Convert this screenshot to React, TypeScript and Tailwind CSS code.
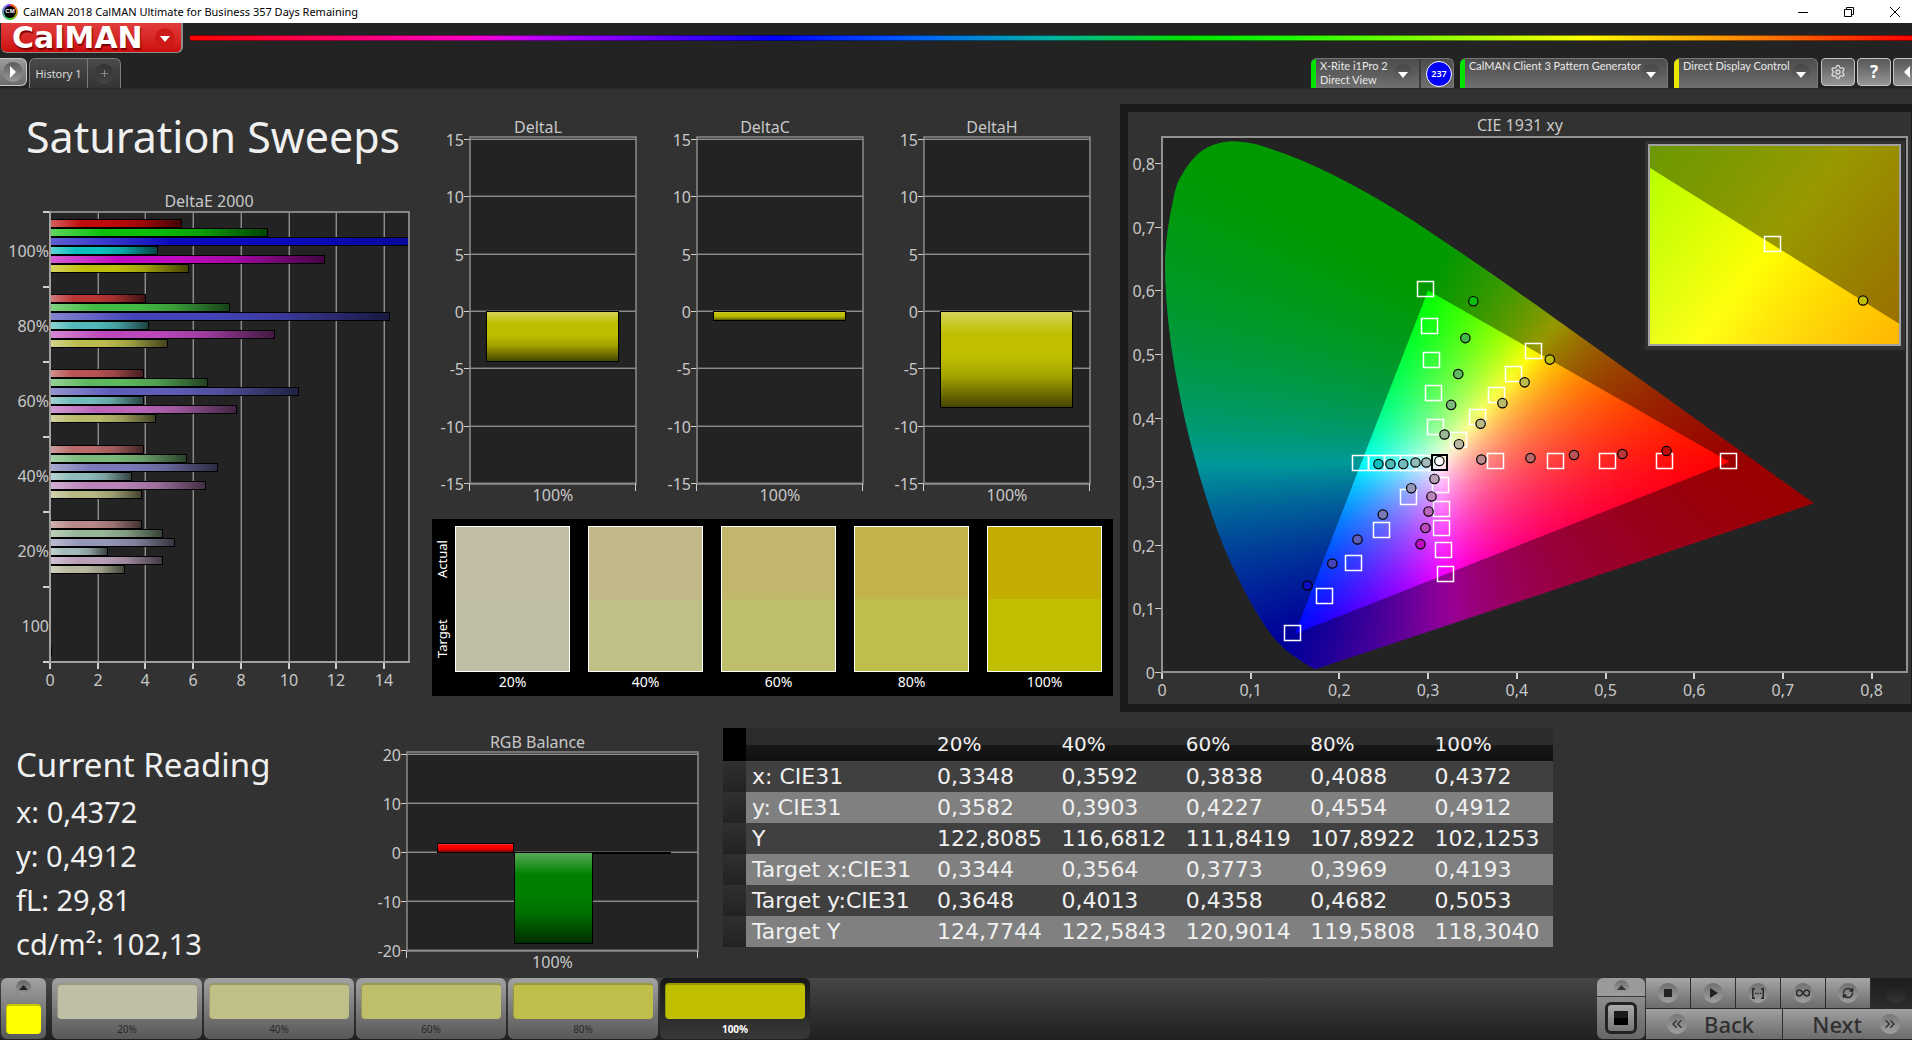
import React, { useMemo } from 'react';
import { clsx } from 'clsx';
import { ChevronsLeft, ChevronsRight, Settings, RefreshCw } from 'lucide-react';

const LEVELS = ['20%', '40%', '60%', '80%', '100%'];

// one row per saturation level, R G B C M Y
const PALETTE: Record<string, string[]> = {
  '100%': ['#bf0b0b', '#0bbf0b', '#0b0bbf', '#0bbfbf', '#bf0bbf', '#bfbf0b'],
  '80%': ['#bb3636', '#44bb44', '#4444b8', '#52baba', '#bb48bb', '#bbbb4e'],
  '60%': ['#b95252', '#5eb95e', '#5e5eb9', '#72bbbb', '#b966b9', '#b9b96a'],
  '40%': ['#b96a6a', '#7ab97a', '#7a7ab9', '#90bbbb', '#b984b9', '#b9b986'],
  '20%': ['#b98888', '#98b698', '#9696b8', '#a4b9b9', '#b9a0b9', '#b9b9a0'],
};

const DELTA_E = [
  { label: '100%', values: [5.5, 9.1, 21, 4.5, 11.5, 5.8] },
  { label: '80%', values: [4, 7.5, 14.2, 4.1, 9.4, 4.9] },
  { label: '60%', values: [3.9, 6.6, 10.4, 3.9, 7.8, 4.4] },
  { label: '40%', values: [3.9, 5.7, 7, 3.4, 6.5, 3.8] },
  { label: '20%', values: [3.8, 4.7, 5.2, 2.4, 4.7, 3.1] },
];

const SWATCHES = [
  { label: '20%', actual: '#c2bda6', target: '#bebfa5' },
  { label: '40%', actual: '#c3b88a', target: '#bfbf88' },
  { label: '60%', actual: '#c2b56c', target: '#bebe6b' },
  { label: '80%', actual: '#c2b34b', target: '#bebf4a' },
  { label: '100%', actual: '#c2ad00', target: '#bfbf00' },
];

const READINGS = ['x: 0,4372', 'y: 0,4912', 'fL: 29,81', 'cd/m²: 102,13'];

const TABLE_ROWS = [
  { name: 'x: CIE31', cells: ['0,3348', '0,3592', '0,3838', '0,4088', '0,4372'] },
  { name: 'y: CIE31', cells: ['0,3582', '0,3903', '0,4227', '0,4554', '0,4912'] },
  { name: 'Y', cells: ['122,8085', '116,6812', '111,8419', '107,8922', '102,1253'] },
  { name: 'Target x:CIE31', cells: ['0,3344', '0,3564', '0,3773', '0,3969', '0,4193'] },
  { name: 'Target y:CIE31', cells: ['0,3648', '0,4013', '0,4358', '0,4682', '0,5053'] },
  { name: 'Target Y', cells: ['124,7744', '122,5843', '120,9014', '119,5808', '118,3040'] },
];

type Point = [number, number];

const LOCUS: Point[] = [
  [0.1741, 0.005], [0.1714, 0.0051], [0.1644, 0.0109], [0.1566, 0.0177], [0.144, 0.0297], [0.1355, 0.0399],
  [0.1241, 0.0578], [0.1096, 0.0868], [0.0913, 0.1327], [0.0687, 0.2007], [0.0454, 0.295], [0.0235, 0.4127],
  [0.0082, 0.5384], [0.0039, 0.6548], [0.0139, 0.7502], [0.024, 0.785], [0.0389, 0.812], [0.0550, 0.827],
  [0.0743, 0.8338], [0.094, 0.8325], [0.1142, 0.8262], [0.1547, 0.8059], [0.1929, 0.7816], [0.2296, 0.7543],
  [0.2658, 0.7243], [0.3016, 0.6923], [0.3731, 0.6245], [0.4441, 0.5547], [0.5125, 0.4866], [0.5752, 0.4242],
  [0.627, 0.3725], [0.6658, 0.334], [0.6915, 0.3083], [0.719, 0.2809], [0.7347, 0.2653],
];

const REC709: Point[] = [[0.64, 0.33], [0.3, 0.6], [0.15, 0.06]];

// 100% first, down to 20%
const TARGETS: Point[] = [
  [0.639, 0.332], [0.567, 0.332], [0.503, 0.332], [0.444, 0.332], [0.376, 0.332],
  [0.298, 0.602], [0.302, 0.544], [0.304, 0.49], [0.307, 0.439], [0.309, 0.385],
  [0.148, 0.061], [0.184, 0.1195], [0.216, 0.1706], [0.2475, 0.2225], [0.279, 0.275],
  [0.224, 0.3294], [0.242, 0.3294], [0.26, 0.3294], [0.278, 0.3294], [0.295, 0.3294],
  [0.32, 0.154], [0.318, 0.192], [0.316, 0.226], [0.316, 0.257], [0.3145, 0.294],
  [0.4193, 0.5053], [0.3969, 0.4682], [0.3773, 0.4358], [0.3564, 0.4013], [0.3344, 0.3648],
];

const ACTUALS: Point[][] = [
  [[0.5688, 0.3475], [0.519, 0.3428], [0.4645, 0.3412], [0.4154, 0.3365], [0.36, 0.334]],
  [[0.351, 0.583], [0.342, 0.525], [0.334, 0.4685], [0.326, 0.42], [0.3185, 0.3734]],
  [[0.164, 0.136], [0.192, 0.1706], [0.2204, 0.2083], [0.249, 0.2476], [0.281, 0.289]],
  [[0.244, 0.327], [0.2576, 0.327], [0.272, 0.327], [0.2858, 0.3294], [0.298, 0.3294]],
  [[0.2914, 0.201], [0.297, 0.2264], [0.3005, 0.2524], [0.3038, 0.276], [0.3072, 0.3035]],
  [[0.4372, 0.4912], [0.4088, 0.4554], [0.3838, 0.4227], [0.3592, 0.3903], [0.3348, 0.3582]],
];

function mix(hex: string, to: number, amount: number) {
  const n = parseInt(hex.slice(1), 16);
  const ch = [n >> 16, (n >> 8) & 255, n & 255].map((c) => Math.round(c + (to - c) * amount));
  return `rgb(${ch.join(',')})`;
}

// linear on purpose, gamma would wash out the middle of the gamut
function xyToRgb(x: number, y: number) {
  const X = x / y;
  const Z = (1 - x - y) / y;
  const lin = [
    3.2406 * X - 1.5372 - 0.4986 * Z,
    -0.9689 * X + 1.8758 + 0.0415 * Z,
    0.0557 * X - 0.204 + 1.057 * Z,
  ].map((c) => Math.max(0, c));
  const top = Math.max(...lin);
  return `rgb(${lin.map((c) => Math.round((255 * c) / top)).join(',')})`;
}

function Shade({ id, color, vertical }: { id: string; color: string; vertical?: boolean }) {
  return (
    <linearGradient id={id} x1="0" y1="0" x2={vertical ? 0 : 1} y2={vertical ? 1 : 0}>
      <stop offset="0" stopColor={mix(color, 255, 0.35)} />
      <stop offset="0.24" stopColor={color} />
      <stop offset="0.46" stopColor={color} />
      <stop offset="0.68" stopColor={mix(color, 0, 0.15)} />
      <stop offset="1" stopColor={mix(color, 0, 0.65)} />
    </linearGradient>
  );
}

function DeltaEChart() {
  const px = (v: number) => Math.round(50 + v * 23.85);
  return (
    <svg viewBox="0 0 420 508" className="w-full font-['Noto_Sans',sans-serif] text-[16px]" role="img" aria-label="DeltaE 2000">
      <defs>
        <clipPath id="de-plot"><rect x="50" y="22" width="359" height="451" /></clipPath>
        {DELTA_E.map((g) => PALETTE[g.label].map((c, i) => (
          <Shade key={g.label + i} id={`de-${parseInt(g.label)}-${i}`} color={c} />
        )))}
      </defs>
      <text x="209" y="18" textAnchor="middle" fill="#c8c8c8">DeltaE 2000</text>
      <rect x="50" y="22" width="359" height="451" fill="#232323" />
      {[2, 4, 6, 8, 10, 12, 14].map((v) => (
        <g key={v}>
          <rect x={px(v) - 1} y="23" width="1" height="450" fill="#505050" />
          <rect x={px(v)} y="23" width="1" height="450" fill="#8c8c8c" />
        </g>
      ))}
      <g clipPath="url(#de-plot)">
        {DELTA_E.map((g, gi) => g.values.map((v, i) => (
          <rect
            key={i}
            x="50.5"
            y={Math.round(gi * 75.2) + 30.5 + i * 9}
            width={px(v) - 50}
            height="8"
            fill={`url(#de-${parseInt(g.label)}-${i})`}
            stroke="#000"
          />
        )))}
      </g>
      <rect x="50" y="458" width="2" height="9" fill="#000" />
      <path d="M50 23h359v450" fill="none" stroke="#858585" strokeWidth="2" />
      <path d="M50 22v451h360" fill="none" stroke="#a0a0a0" strokeWidth="2" />
      {[0, 1, 2, 3, 4, 5, 6].map((i) => (
        <rect key={i} x="43" y={Math.round(22 + i * 75)} width="6" height="2" fill="#d0d0d0" />
      ))}
      {['100%', '80%', '60%', '40%', '20%', '100'].map((t, i) => (
        <text key={i} x="49" y={68 + i * 75} textAnchor="end" fill="#c8c8c8">{t}</text>
      ))}
      {[0, 2, 4, 6, 8, 10, 12, 14].map((v) => (
        <g key={v}>
          <rect x={px(v) - 1} y="474" width="2" height="6" fill="#d0d0d0" />
          <text x={px(v)} y="497" textAnchor="middle" fill="#c8c8c8">{v}</text>
        </g>
      ))}
    </svg>
  );
}

interface Bar { x: number; width: number; value: number; color: string }

interface ValueChartProps {
  id: string;
  title: string;
  width: number;
  height: number;
  left: number;
  right: number;
  top: number;
  bottom: number;
  max: number;
  step: number;
  bars: Bar[];
}

function ValueChart({ id, title, width, height, left, right, top, bottom, max, step, bars }: ValueChartProps) {
  const py = (v: number) => Math.round(top + ((max - v) / (2 * max)) * (bottom - top));
  const ticks: number[] = [];
  for (let v = max; v >= -max; v -= step) ticks.push(v);

  return (
    <svg viewBox={`0 0 ${width} ${height}`} className="w-full font-['Noto_Sans',sans-serif] text-[16px]" role="img" aria-label={title}>
      <defs>
        {bars.map((b, i) => <Shade key={i} id={`${id}-${i}`} color={b.color} vertical />)}
      </defs>
      <text x={(left + right) / 2 - 15} y={top - 6} textAnchor="middle" fill="#c8c8c8">{title}</text>
      <rect x={left} y={top - 2} width={right - left} height={bottom - top + 2} fill="#232323" />
      {ticks.map((v) => (
        <g key={v}>
          <rect x={left} y={py(v) - 1} width={right - left} height="1" fill="#505050" />
          <rect x={left} y={py(v)} width={right - left} height="1" fill="#8c8c8c" />
          <rect x={left - 6} y={py(v)} width="6" height="1" fill="#d0d0d0" />
          <text x={left - 6} y={py(v) + 7} textAnchor="end" fill="#c8c8c8">{v}</text>
        </g>
      ))}
      <rect x={left} y={top - 2} width={right - left} height={bottom - top + 3} fill="none" stroke="#8c8c8c" strokeWidth="1.5" />
      {bars.map((b, i) => (
        <rect
          key={i}
          x={b.x + 0.5}
          y={Math.min(py(0), py(b.value)) + 0.5}
          width={b.width}
          height={Math.max(1, Math.abs(py(b.value) - py(0)))}
          fill={`url(#${id}-${i})`}
          stroke="#000"
        />
      ))}
      <rect x={left - 1} y={bottom + 1} width="1" height="7" fill="#d0d0d0" />
      <rect x={right - 1} y={bottom + 1} width="1" height="7" fill="#d0d0d0" />
      <text x={(left + right) / 2} y={bottom + 18} textAnchor="middle" fill="#c8c8c8">100%</text>
    </svg>
  );
}

interface FieldProps {
  id: string;
  x: number;
  y: number;
  width: number;
  height: number;
  toXY: (px: number, py: number) => Point;
}

// chromaticity field, painted as thin rows with a gradient each
function ColorField({ id, x, y, width, height, toXY }: FieldProps) {
  const rows = useMemo(() => {
    const out: React.ReactNode[] = [];
    const cols = Math.round(width / 14);
    for (let row = 0; row * 3 < height; row++) {
      const top = y + row * 3;
      const stops: React.ReactNode[] = [];
      for (let c = 0; c <= cols; c++) {
        const [cx, cy] = toXY(x + (c / cols) * width, top + 1);
        stops.push(<stop key={c} offset={c / cols} stopColor={xyToRgb(cx, Math.max(cy, 0.002))} />);
      }
      out.push(
        <g key={row}>
          <linearGradient id={`${id}-r${row}`} gradientUnits="userSpaceOnUse" x1={x} y1="0" x2={x + width} y2="0">{stops}</linearGradient>
          <rect x={x} y={top} width={width} height={Math.min(3, y + height - top)} fill={`url(#${id}-r${row})`} shapeRendering="crispEdges" />
        </g>,
      );
    }
    return out;
  }, [id, x, y, width, height, toXY]);
  return <g id={id}>{rows}</g>;
}

const sx = (x: number) => 34 + 887 * x;
const sy = (y: number) => 560 - 636 * y;
const unproject = (px: number, py: number): Point => [(px - 34) / 887, (560 - py) / 636];

// magnified view around the 100% yellow target
const zx = (x: number) => 644 + (x - 0.4193) * 5084;
const zy = (y: number) => 132 - (y - 0.5053) * 4007;
const unprojectZoom = (px: number, py: number): Point => [0.4193 + (px - 644) / 5084, 0.5053 - (py - 132) / 4007];

const poly = (pts: Point[], fx: (n: number) => number, fy: (n: number) => number) =>
  pts.map(([a, b]) => `${fx(a).toFixed(1)},${fy(b).toFixed(1)}`).join(' ');

function smoothPath(pts: Point[]) {
  const p = pts.map(([a, b]): Point => [sx(a), sy(b)]);
  let d = `M${p[0][0]} ${p[0][1]}`;
  for (let i = 0; i < p.length - 1; i++) {
    const p0 = p[Math.max(0, i - 1)];
    const p3 = p[Math.min(p.length - 1, i + 2)];
    const [p1, p2] = [p[i], p[i + 1]];
    d += `C${p1[0] + (p2[0] - p0[0]) / 6} ${p1[1] + (p2[1] - p0[1]) / 6} ${p2[0] - (p3[0] - p1[0]) / 6} ${p2[1] - (p3[1] - p1[1]) / 6} ${p2[0]} ${p2[1]}`;
  }
  return d + 'Z';
}

function CieChart() {
  const levels = ['100%', '80%', '60%', '40%', '20%'];
  return (
    <svg viewBox="0 0 783 592" className="w-full font-['Noto_Sans',sans-serif] text-[16px]" role="img" aria-label="CIE 1931 xy">
      <defs>
        <clipPath id="locus"><path d={smoothPath(LOCUS)} /></clipPath>
        <clipPath id="gamut"><polygon points={poly(REC709, sx, sy)} /></clipPath>
        <clipPath id="zoom-gamut"><polygon points={poly(REC709, zx, zy)} /></clipPath>
        <clipPath id="zoom-box"><rect x="521" y="33" width="251" height="200" /></clipPath>
        <ColorField id="field" x={34} y={26} width={656} height={534} toXY={unproject} />
        <ColorField id="zoom-field" x={521} y={33} width={251} height={200} toXY={unprojectZoom} />
      </defs>
      <text x="392" y="19" textAnchor="middle" fill="#c8c8c8">CIE 1931 xy</text>
      <rect x="34" y="25" width="746" height="535" fill="#232323" />
      <g clipPath="url(#locus)">
        <use href="#field" />
        <rect x="34" y="25" width="660" height="535" fill="#000" fillOpacity="0.4" />
      </g>
      <g clipPath="url(#gamut)"><use href="#field" /></g>
      <rect x="34" y="25" width="745" height="535" fill="none" stroke="#929292" strokeWidth="2" />

      {TARGETS.map(([x, y], i) => (
        <rect key={i} x={Math.round(sx(x)) - 8.5} y={Math.round(sy(y)) - 7.5} width="16" height="15" fill="none" stroke="#fff" strokeWidth="1.5" />
      ))}
      <rect x="304" y="343" width="15" height="15" fill="none" stroke="#000" strokeWidth="2" />
      {ACTUALS.map((set, hue) => set.map(([x, y], i) => (
        <circle key={`${hue}-${i}`} cx={sx(x)} cy={sy(y)} r="4.7" fill={PALETTE[levels[i]][hue]} stroke="#000" strokeWidth="1.2" />
      )))}
      <circle cx={sx(0.3127)} cy={sy(0.3318)} r="4.7" fill="#fff" stroke="#000" strokeWidth="1.2" />

      <rect x="517" y="29" width="260" height="209" fill="#323232" />
      <g clipPath="url(#zoom-box)">
        <use href="#zoom-field" />
        <rect x="521" y="33" width="251" height="200" fill="#000" fillOpacity="0.4" />
        <g clipPath="url(#zoom-gamut)"><use href="#zoom-field" /></g>
      </g>
      <rect x="521" y="33" width="251" height="200" fill="none" stroke="#a0a0a0" strokeWidth="2" />
      <rect x="636.5" y="124.5" width="16" height="15" fill="none" stroke="#fff" strokeWidth="1.5" />
      <circle cx={zx(0.4372)} cy={zy(0.4912)} r="4.7" fill="#bfbf00" stroke="#000" strokeWidth="1.2" />

      {[0, 1, 2, 3, 4, 5, 6, 7, 8].map((n) => (
        <g key={n}>
          <rect x={Math.round(sx(n / 10)) - 1} y="561" width="2" height="6" fill="#d0d0d0" />
          <text x={sx(n / 10)} y="584" textAnchor="middle" fill="#c8c8c8">{n ? `0,${n}` : '0'}</text>
          <rect x="27" y={Math.round(sy(n / 10))} width="6" height="1" fill="#d0d0d0" />
          <text x="27" y={sy(n / 10) + 7} textAnchor="end" fill="#c8c8c8">{n ? `0,${n}` : '0'}</text>
        </g>
      ))}
    </svg>
  );
}

function Arrow() {
  return (
    <span className="flex size-5 shrink-0 items-center justify-center rounded-full bg-linear-to-b from-[#454545] to-[#6c6c6c]">
      <svg viewBox="0 0 10 6" className="mt-0.5 h-1.5 w-2.5" fill="#fff"><path d="M0 0h10L5 6z" /></svg>
    </span>
  );
}

function TitleBar() {
  return (
    <div className="flex h-[23px] items-center bg-white pr-3 pl-0.5 text-black">
      <span className="flex size-4 items-center justify-center rounded-full bg-conic from-[#ff2020] via-[#20d020] to-[#8020ff]">
        <span className="flex size-3 items-center justify-center rounded-full bg-black font-['Liberation_Sans',sans-serif] text-[6px] font-bold text-white">CM</span>
      </span>
      <span className="ml-[5px] font-['Noto_Sans',sans-serif] text-[11px] leading-4">CalMAN 2018 CalMAN Ultimate for Business 357 Days Remaining</span>
      <div className="ml-auto flex items-center gap-9">
        <button aria-label="Minimize" className="flex h-4 w-2.5 items-center">
          <svg viewBox="0 0 10 10" className="size-2.5"><path d="M0 5.5h10" stroke="#000" /></svg>
        </button>
        <button aria-label="Restore" className="flex h-4 w-2.5 items-center">
          <svg viewBox="0 0 10 10" className="size-2.5" fill="none" stroke="#000"><path d="M.5 2.5h7v7h-7zM2.5 2.5v-2h7v7h-2" /></svg>
        </button>
        <button aria-label="Close" className="flex h-4 w-2.5 items-center">
          <svg viewBox="0 0 10 10" className="size-2.5" stroke="#000"><path d="M0 0l10 10M10 0L0 10" /></svg>
        </button>
      </div>
    </div>
  );
}

function DeviceTab({ color, lines, className, children }: { color: string; lines: string[]; className?: string; children?: React.ReactNode }) {
  return (
    <div className={clsx("flex h-[30px] overflow-hidden rounded-t-md border-t border-r border-[#777] bg-linear-to-b from-[#4c4c4c] to-[#707070]", className)}>
      <span className={clsx('w-[5px] shrink-0', color)} />
      <button className="flex flex-1 items-center justify-between pr-1.5 pl-1">
        <span className="self-start text-left font-['Lato',sans-serif] text-[11px] leading-[14px] whitespace-nowrap text-[#e8e8e8]">
          {lines.map((l) => <span key={l} className="block">{l}</span>)}
        </span>
        <Arrow />
      </button>
      {children}
    </div>
  );
}

function ToolButton({ label, className, children }: { label: string; className?: string; children: React.ReactNode }) {
  return (
    <button aria-label={label} className={clsx('flex h-7 items-center justify-center rounded-sm border border-[#c4c4c4] bg-linear-to-b from-[#585858] to-[#969696]', className)}>
      <span className="flex size-5 items-center justify-center rounded-full bg-linear-to-b from-[#5c5c5c] to-[#909090] text-white">{children}</span>
    </button>
  );
}

function Header() {
  return (
    <header className="bg-[#232323]">
      <div className="flex items-center">
        <button className="ml-px flex h-[30px] w-[182px] items-center justify-between rounded-b-md border-r-2 border-b border-[#8d8d8d] bg-linear-to-b from-[#e23c3c] to-[#cc0a0a] pr-1.5 pl-[11px]">
          <span className="font-['DejaVu_Sans',sans-serif] text-[30px] leading-[30px] font-bold text-white [text-shadow:1px_2px_1px_#7a0000]">CalMAN</span>
          <span className="flex size-5 items-center justify-center rounded-full bg-[#cf1a1a]">
            <svg viewBox="0 0 10 6" className="mt-0.5 h-1.5 w-2.5" fill="#fff"><path d="M0 0h10L5 6z" /></svg>
          </span>
        </button>
        <div className="ml-[7px] h-[6px] flex-1 border-y border-black/50 bg-[linear-gradient(90deg,#ff0000,#ff00c0_16%,#c000ff_20%,#0000ff_34%,#0060ff_42%,#00b0a0_50%,#00e000_58%,#20ff00_64%,#ffff00_81%,#ff8000_91%,#ff0000)]" />
      </div>
      <div className="mt-[5px] flex items-start">
        <button aria-label="Open workflow" className="flex h-7 w-[27px] items-center justify-center rounded-r-md border border-l-0 border-[#c8c8c8] bg-linear-to-b from-[#9c9c9c] to-[#6c6c6c]">
          <span className="flex size-5 items-center justify-center rounded-full bg-linear-to-b from-[#5c5c5c] to-[#999]">
            <svg viewBox="0 0 6 12" className="h-3 w-1.5" fill="#fff"><path d="M0 0l6 6-6 6z" /></svg>
          </span>
        </button>
        <div className="ml-0.5 flex h-[30px] rounded-t-md border border-b-0 border-[#7c7c7c] bg-linear-to-b from-[#4a4a4a] to-[#333]">
          <button className="w-[58px] border-r border-[#7c7c7c] text-center font-['Noto_Sans',sans-serif] text-[11px] leading-4 text-[#dcdcdc]">History 1</button>
          <button aria-label="Add tab" className="flex w-8 items-center justify-center">
            <span className="flex size-5 items-center justify-center rounded-full bg-linear-to-b from-[#333] to-[#444]">
              <svg viewBox="0 0 7 7" className="size-[7px]" stroke="#888"><path d="M3.5 0v7M0 3.5h7" /></svg>
            </span>
          </button>
        </div>
        <div className="ml-auto flex items-start">
          <DeviceTab color="bg-[#00e400]" className="w-[143px]" lines={['X-Rite i1Pro 2', 'Direct View']}>
            <span className="flex w-[34px] items-center justify-center border-l-2 border-[#3c3c3c] pl-1">
              <span className="flex size-[26px] items-center justify-center rounded-full border border-white bg-[#0000fa] font-['Noto_Sans',sans-serif] text-[9px] font-semibold text-white">237</span>
            </span>
          </DeviceTab>
          <DeviceTab color="bg-[#00e400]" className="ml-1.5 w-[208px]" lines={['CalMAN Client 3 Pattern Generator']} />
          <DeviceTab color="bg-[#e8e800]" className="ml-1.5 w-[144px]" lines={['Direct Display Control']} />
          <ToolButton label="Settings" className="ml-[3px] w-[34px]"><Settings className="size-4 text-[#ddd]" strokeWidth={2} /></ToolButton>
          <ToolButton label="Help" className="ml-0.5 w-[34px]"><span className="font-['Noto_Sans',sans-serif] text-[17px] leading-5 font-bold">?</span></ToolButton>
          <ToolButton label="Collapse" className="ml-0.5 w-[19px] rounded-r-none border-r-0">
            <svg viewBox="0 0 6 12" className="ml-2 h-3 w-1.5" fill="#fff"><path d="M6 0L0 6l6 6z" /></svg>
          </ToolButton>
        </div>
      </div>
    </header>
  );
}

function SwatchPanel() {
  return (
    <div className="mt-2.5 flex h-[177px] bg-black pt-[7px] pr-[11px] font-['Noto_Sans',sans-serif] text-white">
      <div className="mr-[3px] flex h-[146px] w-5 flex-col items-center text-[13px] leading-5">
        <span className="flex flex-1 rotate-180 items-center justify-center pt-2 [writing-mode:vertical-rl]">Actual</span>
        <span className="flex flex-1 rotate-180 items-center justify-center pb-1 [writing-mode:vertical-rl]">Target</span>
      </div>
      <div className="grid flex-1 grid-cols-5 gap-[18px]">
        {SWATCHES.map((s) => (
          <div key={s.label} className="text-center">
            <div className="h-[146px] border border-white">
              <div className="h-1/2" style={{ background: s.actual }} />
              <div className="h-1/2" style={{ background: s.target }} />
            </div>
            <div className="text-[14px] leading-5">{s.label}</div>
          </div>
        ))}
      </div>
    </div>
  );
}

function ReadingsTable() {
  return (
    <table className="w-full table-fixed border-collapse text-left font-['DejaVu_Sans',sans-serif] text-[22px] leading-[31px] text-[#f0f0f0]">
      <colgroup>
        <col className="w-[23px]" />
        <col className="w-[185px]" />
        <col span={5} />
      </colgroup>
      <thead>
        <tr className="h-[33px]">
          <th className="bg-black" />
          <th className="bg-[linear-gradient(#2c2c2c_50%,#181818_50%,#101010)]" />
          {LEVELS.map((l) => (
            <th key={l} scope="col" className="bg-[linear-gradient(#2c2c2c_50%,#181818_50%,#101010)] pl-1.5 text-[20px] font-normal">{l}</th>
          ))}
        </tr>
      </thead>
      <tbody>
        {TABLE_ROWS.map((r, i) => (
          <tr key={r.name} className={clsx('h-[31px]', i % 2 ? 'bg-[#808080]' : 'bg-[#404040]')}>
            <td className="bg-linear-to-b from-[#303030] to-[#222]" />
            <th scope="row" className="pl-1.5 font-normal whitespace-nowrap">{r.name}</th>
            {r.cells.map((c, j) => <td key={j} className="pl-1.5">{c}</td>)}
          </tr>
        ))}
      </tbody>
    </table>
  );
}

function Transport({ label, children, dark }: { label: string; children?: React.ReactNode; dark?: boolean }) {
  return (
    <button
      aria-label={label}
      className={clsx('flex h-[30px] items-center justify-center bg-linear-to-b', dark ? 'flex-1 from-[#1e1e1e] to-[#2c2c2c] pl-2' : 'w-11 from-[#a6a6a6] to-[#6c6c6c]')}
    >
      <span className={clsx('flex size-5 items-center justify-center rounded-full bg-linear-to-b', dark ? 'from-[#1c1c1c] to-[#343434]' : 'from-[#707070] to-[#a0a0a0]')}>{children}</span>
    </button>
  );
}

function Footer() {
  return (
    <footer className="flex h-[62px] bg-linear-to-b from-[#464646] to-[#202020] pb-px pl-px font-['Noto_Sans',sans-serif]">
      <button aria-label="Current color" className="flex w-[45px] flex-col items-center justify-between rounded-md bg-linear-to-b from-[#a2a2a2] to-[#585858] pt-0.5 pb-[5px]">
        <span className="flex size-[15px] items-center justify-center rounded-full bg-linear-to-b from-[#666] to-[#999]">
          <svg viewBox="0 0 9 5" className="h-[5px] w-[9px]" fill="#222"><path d="M4.500 0L9 5H0z" /></svg>
        </span>
        <span className="h-[30px] w-[35px] rounded-sm border-t-2 border-l border-[#c9c900] bg-[#ffff00]" />
      </button>
      <div className="ml-1.5 flex gap-0.5">
        {SWATCHES.map((s) => {
          const active = s.label === '100%';
          return (
            <button
              key={s.label}
              className={clsx('flex w-[150px] flex-col items-center rounded-md bg-linear-to-b pt-[5px]', active ? 'from-[#181818] to-[#383838]' : 'from-[#a2a2a2] to-[#585858]')}
            >
              <span className="h-9 w-[140px] rounded-sm border-t-2 border-l border-black/20" style={{ backgroundColor: s.target }} />
              <span className={clsx('text-[10px] leading-5', active ? 'font-bold text-white' : 'text-[#2a2a2a]')}>{s.label}</span>
            </button>
          );
        })}
      </div>
      <div className="ml-auto flex w-12 flex-col gap-px">
        <button aria-label="Expand" className="flex h-[18px] items-center justify-center rounded-t-md bg-[#9a9a9a]">
          <span className="flex size-[15px] items-center justify-center rounded-full bg-linear-to-b from-[#707070] to-[#a4a4a4]">
            <svg viewBox="0 0 9 5" className="h-[5px] w-[9px]" fill="#333"><path d="M4.500 0L9 5H0z" /></svg>
          </span>
        </button>
        <button aria-label="Pattern window" className="flex flex-1 items-center justify-center rounded-b-md bg-linear-to-b from-[#8c8c8c] to-[#666]">
          <span className="flex size-8 items-center justify-center rounded-md border-[3px] border-[#222] bg-linear-to-b from-[#aaa] to-[#777]">
            <span className="size-3.5 bg-[linear-gradient(#1a1a1a_50%,#000_50%)]" />
          </span>
        </button>
      </div>
      <div className="ml-px flex w-[266px] flex-col gap-px bg-[#2c2c2c]">
        <div className="flex gap-px">
          <Transport label="Stop"><span className="size-2 bg-[#222]" /></Transport>
          <Transport label="Play"><svg viewBox="0 0 8 10" className="ml-0.5 h-2.5 w-2" fill="#222"><path d="M0 0l8 5-8 5z" /></svg></Transport>
          <Transport label="Read series">
            <svg viewBox="0 0 12 11" className="h-[11px] w-3" fill="none" stroke="#2a2a2a" strokeWidth="1.500"><path d="M3 .7H.8v9.600H3M9 .7h2.200v9.600H9M3 5.500h1.300M5.400 5.500h1.300M7.800 5.500h1.300" /></svg>
          </Transport>
          <Transport label="Continuous">
            <svg viewBox="0 0 14 8" className="h-2 w-3.5" fill="none" stroke="#2a2a2a" strokeWidth="1.500"><path d="M7 4C5.500 1.800 4.700 1 3.500 1a3 3 0 0 0 0 6C4.700 7 5.500 6.200 7 4s2.300-3 3.500-3a3 3 0 0 1 0 6C9.300 7 8.500 6.200 7 4z" /></svg>
          </Transport>
          <Transport label="Refresh"><RefreshCw className="size-3 text-[#2a2a2a]" strokeWidth={3} /></Transport>
          <Transport label="Record" dark />
        </div>
        <div className="flex flex-1 gap-px text-[22px] leading-6 font-medium text-[#303030]">
          <button className="flex w-[136px] items-center bg-linear-to-b from-[#a0a0a0] to-[#6c6c6c] pl-[21px]">
            <span className="flex size-5 items-center justify-center rounded-full bg-linear-to-b from-[#777] to-[#a0a0a0]"><ChevronsLeft className="size-4" /></span>
            <span className="ml-[17px]">Back</span>
          </button>
          <button className="flex flex-1 items-center justify-end bg-linear-to-b from-[#a0a0a0] to-[#6c6c6c] pr-3">
            <span className="mr-[18px]">Next</span>
            <span className="flex size-5 items-center justify-center rounded-full bg-linear-to-b from-[#777] to-[#a0a0a0]"><ChevronsRight className="size-4" /></span>
          </button>
        </div>
      </div>
    </footer>
  );
}

const DELTAS = [
  { id: 'dl', title: 'DeltaL', value: -4.4 },
  { id: 'dc', title: 'DeltaC', value: -0.8 },
  { id: 'dh', title: 'DeltaH', value: -8.4 },
];

export default function App() {
  return (
    <div className="flex min-h-screen flex-col overflow-hidden bg-[#323232]">
      <TitleBar />
      <Header />
      <main className="flex-1 border-t border-[#2a2a2a] font-['Noto_Sans',sans-serif] text-[#f0f0f0]">
        <section className="grid grid-cols-[420fr_700fr_792fr] items-start">
          <div>
            <h1 className="mt-4 mb-5 pl-[26px] text-[43px] leading-[64px] whitespace-nowrap">Saturation Sweeps</h1>
            <DeltaEChart />
          </div>
          <div className="pt-6 pr-[7px] pl-3">
            <div className="grid grid-cols-3">
              {DELTAS.map((d) => (
                <ValueChart
                  key={d.id}
                  id={d.id}
                  title={d.title}
                  width={227}
                  height={396}
                  left={38}
                  right={204}
                  top={26}
                  bottom={370}
                  max={15}
                  step={5}
                  bars={[{ x: 54, width: 132, value: d.value, color: '#bfbf00' }]}
                />
              ))}
            </div>
            <SwatchPanel />
          </div>
          <div className="mt-[15px] border-8 border-r border-[#1b1b1b]">
            <CieChart />
          </div>
        </section>
        <section className="grid grid-cols-[370fr_340fr_843fr_359fr] items-start">
          <div className="pt-7 pl-4 whitespace-nowrap">
            <h2 className="text-[33px] leading-[50px]">Current Reading</h2>
            {READINGS.map((r) => <p key={r} className="text-[29px] leading-[44px]">{r}</p>)}
          </div>
          <div className="pt-4">
            <ValueChart
              id="rgb"
              title="RGB Balance"
              width={340}
              height={244}
              left={37}
              right={328}
              top={26}
              bottom={222}
              max={20}
              step={10}
              bars={[
                { x: 67, width: 76, value: 1.8, color: '#ff0000' },
                { x: 144, width: 78, value: -18.5, color: '#008000' },
                { x: 222, width: 78, value: -0.2, color: '#000000' },
              ]}
            />
          </div>
          <div className="pt-4 pl-[13px]">
            <ReadingsTable />
          </div>
        </section>
      </main>
      <Footer />
    </div>
  );
}
